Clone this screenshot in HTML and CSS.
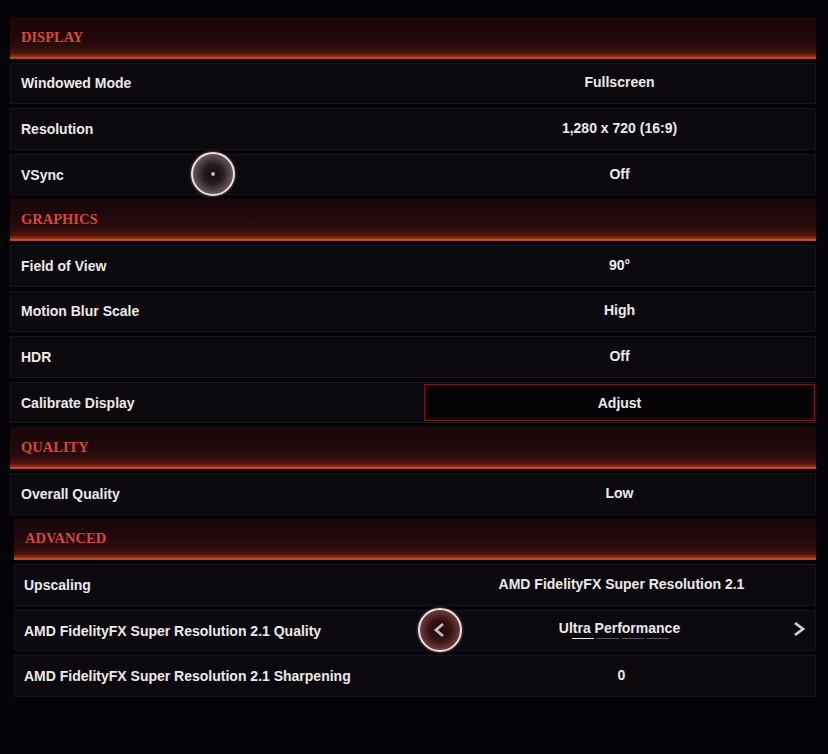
FILE: index.html
```html
<!DOCTYPE html>
<html>
<head>
<meta charset="utf-8">
<link rel="stylesheet" href="styles.css">
</head>
<body>
<div class="panel">
  <div class="hdr"><span>DISPLAY</span></div>
  <div class="row"><div class="label">Windowed Mode</div><div class="value">Fullscreen</div></div>
  <div class="row"><div class="label">Resolution</div><div class="value">1,280 x 720 (16:9)</div></div>
  <div class="row"><div class="label">VSync</div><div class="value">Off</div><div class="cursor cursor-vsync"><span class="dot"></span></div></div>

  <div class="hdr"><span>GRAPHICS</span></div>
  <div class="row"><div class="label">Field of View</div><div class="value">90°</div></div>
  <div class="row"><div class="label">Motion Blur Scale</div><div class="value">High</div></div>
  <div class="row"><div class="label">HDR</div><div class="value">Off</div></div>
  <div class="row"><div class="label">Calibrate Display</div><div class="value value-btn">Adjust</div></div>

  <div class="hdr"><span>QUALITY</span></div>
  <div class="row"><div class="label">Overall Quality</div><div class="value">Low</div></div>

  <div class="adv">
    <div class="hdr"><span>ADVANCED</span></div>
    <div class="row"><div class="label">Upscaling</div><div class="value">AMD FidelityFX Super Resolution 2.1</div></div>
    <div class="row"><div class="label">AMD FidelityFX Super Resolution 2.1 Quality</div>
      <div class="value value-sel">
        <span class="sel-text">Ultra Performance</span>
        <span class="ticks"><i class="on"></i><i></i><i></i><i></i></span>
        <span class="next"><svg width="12" height="16" viewBox="0 0 12 16"><path d="M2 2 L10 8 L2 14" fill="none" stroke="#cfcfcf" stroke-width="2.8" stroke-linejoin="miter"/></svg></span>
      </div>
      <div class="cursor cursor-arrow"><svg width="14" height="16" viewBox="0 0 14 16"><path d="M10 2 L3 8 L10 14" fill="none" stroke="#c9bcbc" stroke-width="2.8"/></svg></div>
    </div>
    <div class="row"><div class="label">AMD FidelityFX Super Resolution 2.1 Sharpening</div><div class="value">0</div></div>
  </div>
</div>
</body>
</html>
```
FILE: styles.css
```css
html, body {
  margin: 0;
  padding: 0;
  background: #050307;
  width: 828px;
  height: 754px;
  overflow: hidden;
}
.panel {
  padding: 17px 12px 0 10px;
  display: flex;
  flex-direction: column;
  gap: 4px;
  font-family: "Liberation Sans", Arial, sans-serif;
}
.adv {
  display: flex;
  flex-direction: column;
  gap: 4px;
  padding-left: 4px;
}
.hdr {
  height: 41.6px;
  box-sizing: border-box;
  display: flex;
  align-items: center;
  padding-left: 11px;
  background: linear-gradient(to bottom, #19070b 0%, #20080c 45%, #2e0b0d 70%, #4e130d 86%, #922f16 94%, #dc622a 98%, #7a2a14 100%);
}
.hdr span {
  font-family: "Liberation Serif", "Times New Roman", serif;
  font-weight: bold;
  font-size: 14.5px;
  color: #d8473a;
  letter-spacing: 0;
  margin-top: -1px;
}
.row {
  position: relative;
  height: 41.6px;
  box-sizing: border-box;
  display: flex;
  align-items: center;
  background: #0b090d;
  border: 1px solid #17151b;
}
.label {
  width: 413px;
  padding-left: 10px;
  box-sizing: border-box;
  color: #ebe9ea;
  font-weight: bold;
  font-size: 14px;
}
.adv .label { padding-left: 9px; }
.value {
  flex: 1;
  align-self: stretch;
  display: flex;
  align-items: center;
  justify-content: center;
  color: #ebe9ea;
  font-weight: bold;
  font-size: 14px;
  margin-top: -2px;
}
.value-btn {
  margin: 1px 0 1px 0;
  border: 1px solid #6e1a1a;
  box-shadow: inset 0 0 4px rgba(140, 30, 30, 0.6);
  background: #050306;
}
.value-sel {
  position: relative;
  margin-left: -4px;
}
.sel-text { margin-top: -3px; }
.ticks {
  position: absolute;
  left: 148px;
  top: 29px;
  display: flex;
  gap: 3px;
}
.ticks i {
  display: block;
  width: 22px;
  height: 1.5px;
  background: #5a5458;
}
.ticks i.on { background: #e8e4e6; }
.next {
  position: absolute;
  right: 10px;
  top: 12px;
  display: flex;
}
.cursor {
  position: absolute;
  width: 44px;
  height: 44px;
  box-sizing: border-box;
  border-radius: 50%;
  border: 2px solid #f3dede;
  display: flex;
  align-items: center;
  justify-content: center;
  box-shadow: 0 0 3px rgba(255, 220, 220, 0.5);
}
.cursor-vsync {
  left: 180px;
  top: -3px;
  background: radial-gradient(circle, #120a0e 0%, #2a1c22 35%, #6d6166 75%, #9a9094 100%);
}
.cursor-vsync .dot {
  width: 4px;
  height: 4px;
  border-radius: 50%;
  background: #bdb8ba;
}
.cursor-arrow {
  left: 403px;
  top: -3px;
  background: radial-gradient(circle, #1c0708 0%, #3a1414 40%, #7a4a4a 80%, #a07878 100%);
}
```
